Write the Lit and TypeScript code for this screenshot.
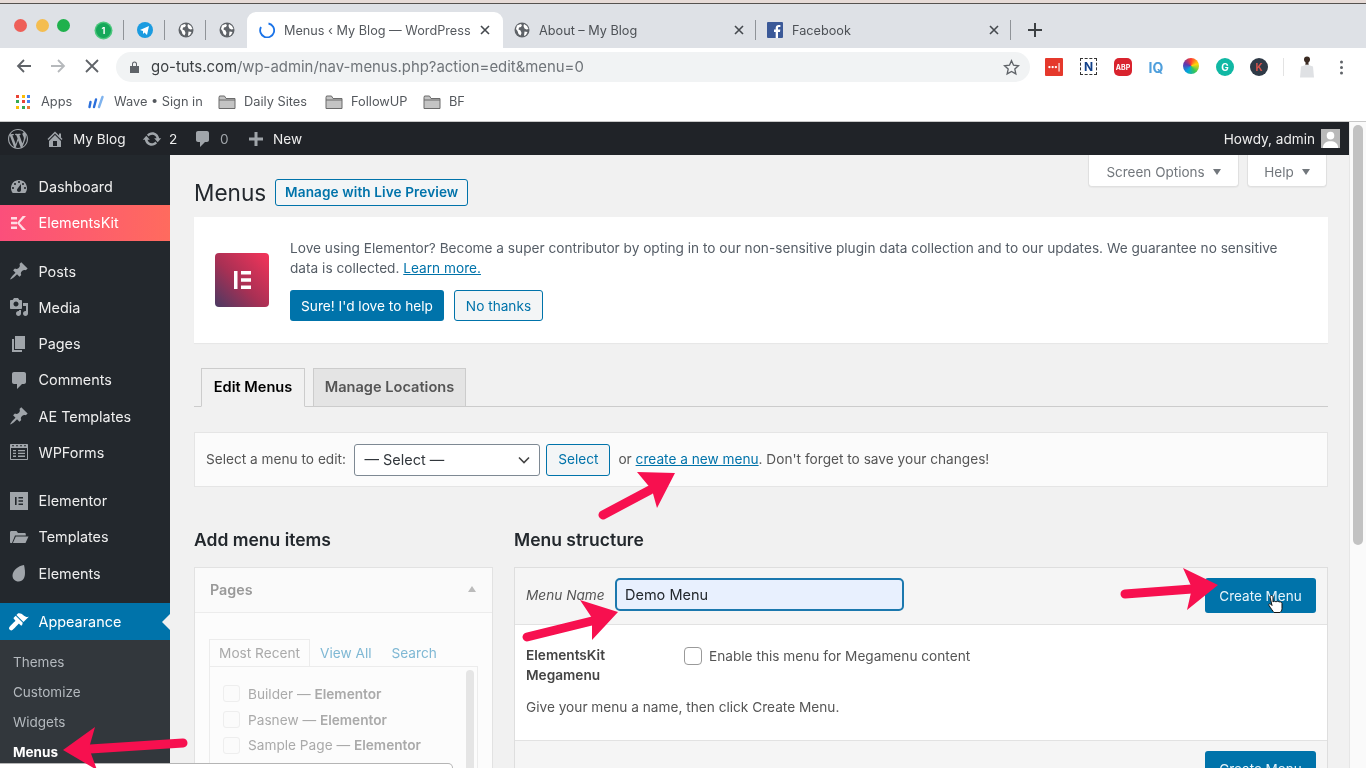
import { LitElement, html, css, svg } from "lit";
import { customElement } from "lit/decorators.js";

const D = {
  wp: "M20 10c0-5.51-4.49-10-10-10C4.48 0 0 4.49 0 10c0 5.52 4.48 10 10 10 5.51 0 10-4.48 10-10zM7.78 15.37L4.37 6.22c.55-.02 1.17-.08 1.17-.08.5-.06.44-1.13-.06-1.11 0 0-1.45.11-2.37.11-.18 0-.37 0-.58-.01C4.12 2.69 6.87 1.11 10 1.11c2.33 0 4.45.87 6.05 2.34-.68-.11-1.65.39-1.65 1.58 0 .74.45 1.36.9 2.1.35.61.55 1.36.55 2.46 0 1.49-1.4 5-1.4 5l-3.03-8.37c.54-.02.82-.17.82-.17.5-.05.44-1.25-.06-1.22 0 0-1.44.12-2.38.12-.87 0-2.33-.12-2.33-.12-.5-.03-.56 1.2-.06 1.22l.92.08 1.26 3.41zM17.41 10c.24-.64.74-1.87.43-4.25.7 1.29 1.05 2.71 1.05 4.25 0 3.29-1.73 6.24-4.4 7.78.97-2.59 1.94-5.2 2.92-7.78zM6.1 18.09C3.12 16.65 1.11 13.53 1.11 10c0-1.3.23-2.48.72-3.59C3.25 10.3 4.67 14.2 6.1 18.09zm4.03-6.63l2.58 6.98c-.86.29-1.76.45-2.71.45-.79 0-1.57-.11-2.29-.33.81-2.38 1.62-4.74 2.42-7.1z",
  home: "M16 8.5l1.53 1.53-1.06 1.06L10 4.62l-6.47 6.47-1.06-1.06L10 2.5l4 4v-2h2v4zm-6-2.46l6 5.99V18H4v-5.97zM12 17v-5H8v5h4z",
  update: "M10.2 3.28c3.53 0 6.43 2.61 6.92 6h2.08l-3.5 4-3.5-4h2.32c-.45-1.97-2.21-3.45-4.32-3.45-1.45 0-2.73.71-3.54 1.78L4.95 5.66C6.23 4.2 8.11 3.28 10.2 3.28zm-.4 13.44c-3.52 0-6.43-2.61-6.92-6H.8l3.5-4c1.17 1.33 2.33 2.67 3.5 4H5.48c.45 1.97 2.21 3.45 4.32 3.45 1.45 0 2.73-.71 3.54-1.78l1.71 1.95c-1.28 1.46-3.15 2.38-5.25 2.38z",
  comment: "M5 2h9c1.1 0 2 .9 2 2v7c0 1.1-.9 2-2 2h-2l-5 5v-5H5c-1.1 0-2-.9-2-2V4c0-1.1.9-2 2-2z",
  plus: "M8.500 3h3v5.500H17v3h-5.500V17h-3v-5.500H3v-3h5.500z",
  dash: "M3.76 16h12.48c1.1-1.37 1.76-3.11 1.76-5 0-4.42-3.58-8-8-8s-8 3.58-8 8c0 1.89.66 3.63 1.76 5zM10 4c.55 0 1 .45 1 1s-.45 1-1 1-1-.45-1-1 .45-1 1-1zM6 6c.55 0 1 .45 1 1s-.45 1-1 1-1-.45-1-1 .45-1 1-1zm8 0c.55 0 1 .45 1 1s-.45 1-1 1-1-.45-1-1 .45-1 1-1zm-5.37 5.55L12 7v6c0 1.1-.9 2-2 2s-2-.9-2-2c0-.57.24-1.08.63-1.45zM4 10c.55 0 1 .45 1 1s-.45 1-1 1-1-.45-1-1 .45-1 1-1zm12 0c.55 0 1 .45 1 1s-.45 1-1 1-1-.45-1-1 .45-1 1-1z",
  ek: "M2 4h6v2.4H2zM2 8.8h6v2.4H2zM2 13.6h6V16H2zM17 3l-6.5 7 6.5 7h-3.4L8 10l5.6-7z",
  pin: "M10.44 3.02l1.82-1.82 6.36 6.35-1.83 1.82c-1.05-.68-2.48-.57-3.41.36l-.75.75c-.92.93-1.04 2.35-.35 3.41l-1.83 1.82-2.41-2.41-2.8 2.79c-.42.42-3.38 2.71-3.8 2.29s1.86-3.39 2.28-3.81l2.79-2.79L4.1 9.36l1.83-1.82c1.05.69 2.48.57 3.4-.36l.75-.75c.93-.92 1.05-2.35.36-3.41z",
  media: "M13 11V4c0-.55-.45-1-1-1h-1.67L9 1H5L3.67 3H2c-.55 0-1 .45-1 1v7c0 .55.45 1 1 1h10c.55 0 1-.45 1-1zM7 4.5c1.38 0 2.5 1.12 2.5 2.5S8.38 9.5 7 9.5 4.5 8.38 4.5 7 5.62 4.5 7 4.5zM14 6h5v10.5c0 1.38-1.12 2.5-2.5 2.5S14 17.88 14 16.5s1.12-2.5 2.5-2.5c.17 0 .34.02.5.05V9h-3V6zm-4 8.05V13h2v3.5c0 1.38-1.12 2.5-2.5 2.5S7 17.88 7 16.5 8.12 14 9.5 14c.17 0 .34.02.5.05z",
  pages: "M6 15V2h10v13H6zm-1 1h8v2H3V5h2v11z",
  comments: "M5 2h10c1.1 0 2 .9 2 2v8c0 1.1-.9 2-2 2h-2l-5 5v-5H5c-1.1 0-2-.9-2-2V4c0-1.1.9-2 2-2z",
  form: "M2 2h16c.6 0 1 .4 1 1v14c0 .6-.4 1-1 1H2c-.6 0-1-.4-1-1V3c0-.6.4-1 1-1zm0 4v11h16V6zm1-3l1 2 1-2zm4 0l1 2 1-2zm4 0l1 2 1-2zm4 0l1 2 1-2zM4 8h3v1.3H4zm5 0h7v1.3H9zM4 10.800h3v1.300H4zm5 0h7v1.300H9zM4 13.600h3v1.300H4zm5 0h7v1.300H9z",
  elementor: "M1 1h18v18H1zM6 6v8h1.600V6zm3.500 0v1.500H14V6zm0 3.200v1.600H14V9.200zm0 3.300V14H14v-1.500z",
  folder: "M1 5.500C1 4.500 1.600 4 2.500 4h5l1.500 2h6.500c.8 0 1.300.5 1.300 1.300V8.500H6L3 16H2c-.6 0-1-.4-1-1zM6.800 9.500H19.500L16.500 16H3.900z",
  leaf: "M15 2C9 3 3.500 7.500 3.500 12.500 3.500 16 6 18.500 9.500 18.500c4.500 0 6.500-4 6.500-8.500 0-3-.5-6-1-8z",
  brush: "M14.480 11.060L7.410 3.990l1.500-1.500c.5-.56 2.300-.47 3.510.32 1.210.8 1.430 1.280 2.910 2.100 1.180.64 2.450 1.260 4.450.85zm-.71.71L6.700 4.700 4.930 6.470c-.39.39-.39 1.020 0 1.410l1.060 1.060c.39.39.39 1.030 0 1.420-.6.6-6.030 5.800-6.030 6.800 0 .9 1.200 2.300 2.400 2.300 1.100 0 6.100-5.600 6.800-6.300.39-.39 1.020-.39 1.410 0l1.060 1.060c.39.39 1.020.39 1.410 0z",
};

const icon = (d: string, cls = "ic") =>
  html`<svg class=${cls} viewBox="0 0 20 20"><path fill-rule="evenodd" d=${d}></path></svg>`;

const globe = html`<svg class="fav" viewBox="0 0 16 16"><circle cx="8" cy="8" r="7.500" fill="#5f6368"></circle><path fill="#fff" d="M3 3.500l3.500-1.500 1.500 1-1 2-2 .5-.5 2 2 1 1 2.500-1 2.500-2-1.500-1-3-1.500-2zM10 2l3 2 1.500 3-2 .5-2-1-1-2.500zM10.500 9.500l3 .5-1.500 3-2 1z"></path></svg>`;

const folderBm = html`<svg class="bmf" viewBox="0 0 18 16"><path fill="#c4c4c4" stroke="#6b6b6b" stroke-width="1" d="M1 3.500V14.500H17V4.500H8L6.500 2H1.500z"></path><path fill="none" stroke="#6b6b6b" d="M1 6H17"></path></svg>`;

const navA: [string, string][] = [["dash", "Dashboard"]];
const navB: [string, string][] = [
  ["pin", "Posts"], ["media", "Media"], ["pages", "Pages"], ["comments", "Comments"],
  ["pin", "AE Templates"], ["form", "WPForms"],
];
const navC: [string, string][] = [["elementor", "Elementor"], ["folder", "Templates"], ["leaf", "Elements"]];

const appsColors = ["#ea4335", "#fbbc05", "#4285f4", "#34a853", "#ea4335", "#4285f4", "#fbbc05", "#34a853", "#ea7a35"];

const arrows: [number[], string][] = [
  [[183, 743, 90, 749], "63,750 95,727 89,748 97,770"],
  [[603, 515, 650, 490], "675,473 637,472 652,490 657,508"],
  [[527, 637, 592, 621], "618,612 580,600 592,618 592,640"],
  [[1125, 594, 1192, 589], "1218,585 1183,568 1192,588 1187,610"],
];

@customElement("app-root")
export class AppRoot extends LitElement {
  static styles = css`
    :host { display: block; width: 1366px; height: 768px; overflow: hidden; position: relative; font-family: Inter, "Noto Sans", sans-serif; background: #fff; }
    * { box-sizing: border-box; }
    svg { display: block; flex: none; }
    .page { width: 1366px; height: 768px; overflow: hidden; filter: blur(0.4px); position: relative; }

    .wall { height: 4px; background: #e6dbd7; border-bottom: 1px solid #55524f; }
    .strip { height: 44px; background: #dee1e6; display: flex; align-items: stretch; font-size: 12.700px; color: #4d5156; }
    .lights { display: flex; align-items: flex-start; gap: 8.500px; padding: 15px 0 0 14px; width: 83px; }
    .lights i { width: 13px; height: 13px; border-radius: 50%; }
    .l1 { background: #ee5f58; } .l2 { background: #f4bd50; } .l3 { background: #1fb14d; }
    .pin { width: 41px; display: flex; align-items: center; justify-content: center; padding-top: 8px; position: relative; }
    .sep::after { content: ""; position: absolute; right: 0; top: 16px; height: 20px; width: 1px; background: #8f9398; }
    .fav { width: 16px; height: 16px; }
    .g1 { width: 15px; height: 15px; border-radius: 50%; background: #16a85a; color: #fff; font-size: 9px; font-weight: 700; display: flex; align-items: center; justify-content: center; box-shadow: 0 0 0 1.500px #4dc77e; }
    .tab { width: 253px; position: relative; display: flex; align-items: center; padding: 8px 12px 0 11px; gap: 9px; }
    .tab.fb { width: 255px; }
    .tab.active { width: 256px; background: #fff; border-radius: 9px 9px 0 0; margin-top: 8px; padding: 0 14px 0 12px; }
    .tab .t { flex: 1; white-space: nowrap; }
    .tab.active .t { color: #55595e; }
    .x { width: 10px; height: 10px; }
    .x path { stroke: #45494e; stroke-width: 1.600; fill: none; }
    .newtab { width: 48px; display: flex; align-items: center; padding: 8px 0 0 17px; }
    .newtab path { stroke: #3c4043; stroke-width: 2; }

    .toolbar { height: 35px; background: #fff; display: flex; align-items: center; }
    .navbtns { width: 116px; display: flex; align-items: center; padding-left: 15px; gap: 16px; }
    .navbtns svg { width: 18px; height: 18px; }
    .omni { width: 914px; height: 30px; margin-top: 3px; background: #f1f3f4; border-radius: 15px; display: flex; align-items: center; padding: 0 10px 0 14px; font-size: 14.900px; color: #70757a; white-space: nowrap; }
    .omni b { font-weight: 400; color: #3c4043; }
    .lock { width: 9px; height: 12px; margin-right: 12px; }
    .star { width: 17px; height: 17px; margin-left: auto; }
    .exts { display: flex; align-items: center; height: 100%; padding-top: 2px; position: relative; flex: 1; }
    .ext { position: absolute; top: 10px; width: 18px; height: 18px; display: flex; align-items: center; justify-content: center; font-weight: 700; }
    .e1 { background: #e5392c; color: #fff; font-size: 7px; letter-spacing: 0; border-radius: 1px; }
    .e2 { border: 1.500px dashed #333; color: #12418a; font-size: 12px; width: 17px; height: 17px; }
    .e3 { background: #d9232e; color: #fff; font-size: 7px; border-radius: 5px; }
    .e4 { color: #4f9fdc; font-size: 14px; }
    .e5 { border-radius: 50%; background: conic-gradient(#ff3b30, #ffd60a, #34c759, #00a5e0, #5e35b1, #ff3b30); width: 16px; height: 16px; }
    .e6 { background: #11b8a4; color: #fff; border-radius: 50%; font-size: 10px; }
    .e7 { background: #2f3a47; color: #d5534c; border-radius: 50%; font-size: 10px; }
    .tsep { position: absolute; left: 253px; top: 10px; width: 1px; height: 18px; background: #e3e3e3; }
    .avatar { position: absolute; left: 268px; top: 8px; width: 18px; height: 22px; }
    .dots { position: absolute; left: 310px; top: 12px; width: 3px; height: 15px; }

    .bookmarks { height: 39px; background: #fff; border-bottom: 1px solid #c8c8c8; display: flex; align-items: center; padding: 0 0 1px 16px; font-size: 12.800px; color: #54585d; white-space: nowrap; }
    .bm { display: flex; align-items: center; }
    .bm.w1 { width: 47px; } .bm.w2 { width: 104px; } .bm.w3 { width: 81px; } .bm.w4 { width: 72px; }
    .apps { width: 14px; height: 14px; display: grid; grid-template-columns: repeat(3, 3px); gap: 2.500px; margin-right: 11px; }
    .apps i { width: 3px; height: 3px; }
    .bmw { width: 17px; height: 14px; margin: 0 9px 0 0; }
    .bmf { width: 18px; height: 16px; margin-right: 8px; }

    .wp { height: 646px; display: flex; background: #f1f1f1; }
    .wpmain { width: 1349px; display: flex; flex-direction: column; }
    .vbar { flex: 1; background: #fafafa; padding: 3px 3px 0; border-left: 1px solid #e6e6e6; }
    .vbar i { display: block; height: 420px; border-radius: 6px; background: #c2c2c2; }

    .adminbar { height: 33px; background: #202328; color: #eee; display: flex; align-items: center; font-size: 13.600px; white-space: nowrap; }
    .adminbar svg { fill: #a0a5aa; width: 20px; height: 20px; }
    .abi { display: flex; align-items: center; }
    .ab1 { width: 45px; padding-left: 8px; } .ab2 { width: 97px; gap: 8px; } .ab3 { width: 51px; gap: 7px; } .ab4 { width: 53px; gap: 7px; } .ab5 { gap: 7px; }
    .howdy { margin-left: auto; display: flex; align-items: center; gap: 6px; padding-right: 9px; }
    .uav { width: 19px; height: 19px; background: #b9b9b9; display: flex; align-items: flex-end; justify-content: center; overflow: hidden; }
    .adminbar .uav svg { width: 19px; height: 19px; fill: #fff; }
    .dim { color: #a0a5aa; }

    .body { flex: 1; display: flex; min-height: 0; }
    .side { width: 170px; background: #23282d; color: #eee; font-size: 14.400px; padding-top: 13.500px; flex: none; }
    .nav { height: 36.250px; display: flex; align-items: center; padding-left: 9px; gap: 9.500px; white-space: nowrap; }
    .nav svg { width: 20px; height: 20px; fill: #a0a5aa; }
    .gap { height: 12px; }
    .nav.ek { background: linear-gradient(90deg, #fb4f7b, #ff6b5e); color: #fff; }
    .nav.ek svg { fill: #fff; opacity: .8; }
    .nav.cur { background: #0073aa; color: #fff; position: relative; }
    .nav.cur svg { fill: #fff; }
    .nav.cur::after { content: ""; position: absolute; right: 0; top: 11px; border: 8px solid transparent; border-right-color: #f1f1f1; border-left: 0; }
    .sub { background: #32373c; color: #b4b9be; font-size: 13.500px; padding-top: 7px; }
    .sub div { height: 30px; display: flex; align-items: center; padding-left: 13px; }
    .sub .on { color: #fff; font-weight: 700; }

    .content { flex: 1; padding: 0 21px 0 24px; min-width: 0; color: #444; font-size: 13.670px; overflow: hidden; }
    .meta { height: 24px; display: flex; justify-content: flex-end; gap: 8px; padding-right: 1px; }
    .meta div { height: 32px; padding-top: 3px; background: #fff; border: 1px solid #e0e0e0; border-top: 0; border-radius: 0 0 4px 4px; box-shadow: 0 1px 1px rgba(0,0,0,.04); display: flex; align-items: center; justify-content: center; gap: 8px; color: #72777c; font-size: 13.500px; }
    .meta .m1 { width: 151px; } .meta .m2 { width: 80px; }
    .tri { width: 0; height: 0; border: 4.500px solid transparent; border-top: 6px solid #72777c; border-bottom: 0; }
    .title { height: 27px; display: flex; align-items: center; gap: 9px; }
    .title h1 { margin: 0 0 1px; font-size: 22.600px; font-weight: 400; color: #23282d; }
    .btn2 { border: 1px solid #0073aa; border-radius: 3px; color: #0073aa; background: #f3f5f6; display: flex; align-items: center; justify-content: center; white-space: nowrap; }
    .btn1 { background: #0073aa; border-radius: 3px; color: #fff; display: flex; align-items: center; justify-content: center; white-space: nowrap; }
    .live { width: 193px; height: 27px; padding-bottom: 1px; font-weight: 600; font-size: 13.600px; letter-spacing: .1px; }

    .notice { margin-top: 11px; height: 126px; background: #fff; display: flex; align-items: center; padding-left: 21px; gap: 21px; box-shadow: 0 1px 1px rgba(0,0,0,.04); }
    .elogo { width: 54px; height: 54px; border-radius: 4px; background: linear-gradient(45deg, #4a3a63 0%, #a83054 45%, #f5345a 100%); display: flex; align-items: center; justify-content: center; }
    .elogo svg { width: 26px; height: 26px; fill: #fff; }
    .ntext { line-height: 20px; white-space: nowrap; color: #555d66; margin-top: -1px; }
    .ntext a, .sel a { color: #0073aa; text-decoration: underline; }
    .nbtns { display: flex; gap: 10px; margin-top: 12px; }
    .nbtns .btn1 { width: 154px; height: 31px; }
    .nbtns .btn2 { width: 89px; height: 31px; }

    .tabs { margin-top: 25px; height: 39px; border-bottom: 1px solid #ccc; display: flex; gap: 8px; padding-left: 7px; font-size: 14.600px; font-weight: 600; }
    .tabs div { height: 39px; padding-bottom: 1px; border: 1px solid #ccc; display: flex; align-items: center; justify-content: center; }
    .tabs .a { width: 104px; background: #f1f1f1; color: #000; border-bottom-color: #f1f1f1; }
    .tabs .b { width: 153px; background: #e4e4e4; color: #555; }

    .sel { margin-top: 25px; height: 55px; background: #fbfbfb; border: 1px solid #e5e5e5; display: flex; align-items: center; padding-left: 11px; white-space: nowrap; color: #555; }
    .dd { width: 186px; height: 32px; margin-left: 8.500px; padding-bottom: 1px; background: #fff; border: 1px solid #7e8993; border-radius: 3px; display: flex; align-items: center; padding-left: 9px; color: #32373c; font-size: 14.500px; position: relative; }
    .dd svg { position: absolute; right: 9px; top: 11px; width: 12px; height: 8px; }
    .selb { width: 64px; height: 32px; margin: 0 8px 0 6px; padding-bottom: 1px; }
    .seltail { margin-bottom: 1px; }

    .cols { margin-top: 41px; display: flex; gap: 21px; align-items: flex-start; }
    .cols h2 { margin: 0 0 15px; height: 24px; line-height: 24px; font-size: 17.500px; font-weight: 600; color: #23282d; }
    .left { width: 299px; flex: none; }
    .right { flex: 1; min-width: 0; }
    .box { border: 1px solid #e2e2e2; background: #fcfcfc; height: 300px; }
    .bh { height: 45px; display: flex; align-items: center; justify-content: space-between; padding: 0 16px 2px 15px; border-bottom: 1px solid #ececec; color: #999; font-weight: 600; font-size: 14.300px; background: #fafafa; }
    .up { width: 0; height: 0; border: 4px solid transparent; border-bottom: 6px solid #bbb; border-top: 0; }
    .bb { padding: 26px 14px 0; }
    .ptabs { display: flex; height: 27px; color: #7fb8d4; }
    .ptabs span { display: flex; align-items: center; }
    .ptabs .pa { width: 101px; border: 1px solid #ececec; border-bottom: 0; color: #aaa; justify-content: center; background: #fcfcfc; margin-right: 10px; position: relative; z-index: 1; margin-bottom: -1px; height: 27px; }
    .ptabs .pv { margin-right: 20px; }
    .plist { height: 200px; border: 1px solid #ececec; position: relative; padding: 14px 0 0 13px; color: #aaa; }
    .plist i { position: absolute; right: 3px; top: 3px; width: 8px; bottom: 0; background: #e5e5e5; border-radius: 4px; }
    .pr { height: 25.700px; display: flex; align-items: center; gap: 8px; white-space: nowrap; }
    .pr u { display: block; width: 17px; height: 17px; border: 1px solid #eee; border-radius: 3px; background: #fbfbfb; }
    .pr b { font-weight: 600; }

    .mbox { border: 1px solid #dedede; background: #fff; }
    .mh { height: 57px; background: #f5f5f5; border-bottom: 1px solid #e2e2e2; display: flex; align-items: flex-start; padding: 10px 11px 0; }
    .mh em { color: #555; width: 89px; height: 33px; display: flex; align-items: center; }
    .inp { width: 289px; height: 33px; background: #e8f0fe; border: 2px solid #1b78ae; border-radius: 5px; display: flex; align-items: center; padding-left: 8px; color: #23282d; font-size: 14.500px; }
    .create { width: 111px; height: 35px; margin-left: auto; font-size: 13.500px; color: #e8f4fa; }
    .mb { padding: 20px 11px 22px; height: 115px; line-height: 20px; color: #555; }
    .mrow { display: grid; grid-template-columns: 158px 1fr; margin-bottom: 12px; }
    .mrow b { font-weight: 600; color: #444; }
    .chk { display: flex; gap: 7px; align-items: flex-start; padding-top: 1px; }
    .chk u { display: block; width: 18px; height: 18px; margin-top: 1px; border: 1.500px solid #9a9a9a; border-radius: 4px; background: #fff; }
    .mf { height: 60px; background: #f5f5f5; border-top: 1px solid #e2e2e2; display: flex; padding: 10px 11px 0; }

    .status { position: absolute; left: 0; top: 763px; width: 453px; height: 8px; background: #fff; border: 1px solid #b5b5b5; border-left: 0; border-radius: 0 5px 0 0; }
    .overlay { position: absolute; left: 0; top: 0; width: 1366px; height: 768px; pointer-events: none; }
  `;

  render() {
    const x = html`<svg class="x" viewBox="0 0 10 10"><path d="M1 1l8 8M9 1l-8 8"></path></svg>`;
    return html`<div class="page">
      <div class="wall"></div>
      <div class="strip">
        <div class="lights"><i class="l1"></i><i class="l2"></i><i class="l3"></i></div>
        <div class="pin sep"><span class="g1">1</span></div>
        <div class="pin sep">
          <svg class="fav" viewBox="0 0 16 16"><circle cx="8" cy="8" r="8" fill="#1b9be0"></circle><path fill="#fff" d="M3 8l9-4-2 9-2.500-2.500-1.500 1.500V9z"></path></svg>
        </div>
        <div class="pin sep">${globe}</div>
        <div class="pin">${globe}</div>
        <div class="tab active">
          <svg class="fav" viewBox="0 0 16 16"><path d="M9.500 1.500A7 7 0 1 1 2 5" fill="none" stroke="#1a73e8" stroke-width="1.800"></path></svg>
          <span class="t">Menus ‹ My Blog — WordPress</span>${x}
        </div>
        <div class="tab sep">${globe}<span class="t">About – My Blog</span>${x}</div>
        <div class="tab fb sep">
          <svg class="fav" viewBox="0 0 16 16"><rect width="16" height="16" rx="1" fill="#3b5998"></rect><path fill="#fff" d="M11 16V10h2l.3-2.400H11V6.200c0-.7.2-1.200 1.200-1.200h1.200V3c-.5-.1-1.100-.1-1.700-.1-1.800 0-3 1.100-3 3.100v1.600H7V10h1.700v6z"></path></svg>
          <span class="t">Facebook</span>${x}
        </div>
        <div class="newtab"><svg width="14" height="14" viewBox="0 0 14 14"><path d="M7 0v14M0 7h14"></path></svg></div>
      </div>

      <div class="toolbar">
        <div class="navbtns">
          <svg viewBox="0 0 18 18"><path d="M16 9H3M9 3L3 9l6 6" fill="none" stroke="#5f6368" stroke-width="1.800"></path></svg>
          <svg viewBox="0 0 18 18"><path d="M2 9h13M9 3l6 6-6 6" fill="none" stroke="#b6b9bc" stroke-width="1.800"></path></svg>
          <svg viewBox="0 0 18 18"><path d="M3 3l12 12M15 3L3 15" fill="none" stroke="#5f6368" stroke-width="1.800"></path></svg>
        </div>
        <div class="omni">
          <svg class="lock" viewBox="0 0 9 12"><path fill="#5f6368" d="M0 5h9v7H0zM2 5V3a2.500 2.500 0 0 1 5 0v2H6V3a1.500 1.500 0 0 0-3 0v2z"></path></svg>
          <b>go-tuts.com</b>/wp-admin/nav-menus.php?action=edit&amp;menu=0
          <svg class="star" viewBox="0 0 20 20"><path d="M10 2l2.400 5.300 5.800.7-4.300 3.900 1.200 5.700-5.100-2.900-5.100 2.900 1.200-5.700L1.800 8l5.800-.7z" fill="none" stroke="#5f6368" stroke-width="1.600"></path></svg>
        </div>
        <div class="exts">
          <span class="ext e1" style="left:15px">•••|</span>
          <span class="ext e2" style="left:50px">N</span>
          <span class="ext e3" style="left:84px">ABP</span>
          <span class="ext e4" style="left:117px">IQ</span>
          <span class="ext e5" style="left:153px"></span>
          <span class="ext e6" style="left:186px">G</span>
          <span class="ext e7" style="left:220px">K</span>
          <i class="tsep"></i>
          <svg class="avatar" viewBox="0 0 18 22"><circle cx="9" cy="3.500" r="3" fill="#3a2a22"></circle><path d="M7.500 6h3v3h-3z" fill="#3a2a22"></path><path d="M3 10.500l6-2 6 2 1 11H2z" fill="#dfe1e4"></path></svg>
          <svg class="dots" viewBox="0 0 3 15"><circle cx="1.500" cy="2" r="1.500" fill="#5f6368"></circle><circle cx="1.500" cy="7.500" r="1.500" fill="#5f6368"></circle><circle cx="1.500" cy="13" r="1.500" fill="#5f6368"></circle></svg>
        </div>
      </div>

      <div class="bookmarks">
        <div class="apps">${appsColors.map((c) => html`<i style="background:${c}"></i>`)}</div>
        <span class="bm w1">Apps</span>
        <svg class="bmw" viewBox="0 0 17 14"><path stroke-linecap="round" stroke-width="2.400" fill="none" stroke="#2a6fdb" d="M2.500 7l-1 5M8 4.500L6 12"></path><path stroke-linecap="round" stroke-width="2.400" fill="none" stroke="#7fb3ee" d="M14.500 2l-3.500 10"></path></svg>
        <span class="bm w2">Wave • Sign in</span>
        ${folderBm}<span class="bm w3">Daily Sites</span>
        ${folderBm}<span class="bm w4">FollowUP</span>
        ${folderBm}<span class="bm">BF</span>
      </div>

      <div class="wp">
        <div class="wpmain">
          <div class="adminbar">
            <div class="abi ab1">${icon(D.wp)}</div>
            <div class="abi ab2">${icon(D.home)}<span>My Blog</span></div>
            <div class="abi ab3">${icon(D.update)}<span>2</span></div>
            <div class="abi ab4">${icon(D.comment)}<span class="dim">0</span></div>
            <div class="abi ab5">${icon(D.plus)}<span>New</span></div>
            <div class="howdy">Howdy, admin
              <span class="uav"><svg viewBox="0 0 20 20"><circle cx="10" cy="7" r="4"></circle><path d="M2 20c0-5 4-7 8-7s8 2 8 7z"></path></svg></span>
            </div>
          </div>
          <div class="body">
            <div class="side">
              ${navA.map(([i, t]) => html`<div class="nav">${icon((D as any)[i])}${t}</div>`)}
              <div class="nav ek">${icon(D.ek)}ElementsKit</div>
              <div class="gap"></div>
              ${navB.map(([i, t]) => html`<div class="nav">${icon((D as any)[i])}${t}</div>`)}
              <div class="gap"></div>
              ${navC.map(([i, t]) => html`<div class="nav">${icon((D as any)[i])}${t}</div>`)}
              <div class="gap"></div>
              <div class="nav cur">${icon(D.brush)}Appearance</div>
              <div class="sub"><div>Themes</div><div>Customize</div><div>Widgets</div><div class="on">Menus</div></div>
            </div>
            <div class="content">
              <div class="meta">
                <div class="m1">Screen Options <span class="tri"></span></div>
                <div class="m2">Help <span class="tri"></span></div>
              </div>
              <div class="title"><h1>Menus</h1><div class="btn2 live">Manage with Live Preview</div></div>
              <div class="notice">
                <div class="elogo"><svg viewBox="0 0 26 26"><path d="M5 4h3.500v18H5zM12 4h10v3.500H12zM12 11.200h10v3.600H12zM12 18.500h10V22H12z"></path></svg></div>
                <div class="ntext">
                  Love using Elementor? Become a super contributor by opting in to our non-sensitive plugin data collection and to our updates. We guarantee no sensitive<br />
                  data is collected. <a>Learn more.</a>
                  <div class="nbtns"><div class="btn1">Sure! I'd love to help</div><div class="btn2">No thanks</div></div>
                </div>
              </div>
              <div class="tabs"><div class="a">Edit Menus</div><div class="b">Manage Locations</div></div>
              <div class="sel">
                <span class="seltail">Select a menu to edit:</span>
                <div class="dd">— Select —<svg viewBox="0 0 12 8"><path d="M1 1.500l5 5 5-5" fill="none" stroke="#444" stroke-width="1.600"></path></svg></div>
                <div class="btn2 selb">Select</div>
                <span class="seltail">or <a>create a new menu</a>. Don't forget to save your changes!</span>
              </div>
              <div class="cols">
                <div class="left">
                  <h2>Add menu items</h2>
                  <div class="box">
                    <div class="bh">Pages<span class="up"></span></div>
                    <div class="bb">
                      <div class="ptabs"><span class="pa">Most Recent</span><span class="pv">View All</span><span>Search</span></div>
                      <div class="plist"><i></i>
                        <div class="pr"><u></u><span>Builder — <b>Elementor</b></span></div>
                        <div class="pr"><u></u><span>Pasnew — <b>Elementor</b></span></div>
                        <div class="pr"><u></u><span>Sample Page — <b>Elementor</b></span></div>
                      </div>
                    </div>
                  </div>
                </div>
                <div class="right">
                  <h2>Menu structure</h2>
                  <div class="mbox">
                    <div class="mh"><em>Menu Name</em><div class="inp">Demo Menu</div><div class="btn1 create">Create Menu</div></div>
                    <div class="mb">
                      <div class="mrow"><b>ElementsKit<br />Megamenu</b><div class="chk"><u></u>Enable this menu for Megamenu content</div></div>
                      Give your menu a name, then click Create Menu.
                    </div>
                    <div class="mf"><div class="btn1 create">Create Menu</div></div>
                  </div>
                </div>
              </div>
            </div>
          </div>
        </div>
        <div class="vbar"><i></i></div>
      </div>

      <div class="status"></div>
      <svg class="overlay" viewBox="0 0 1366 768">
        ${arrows.map(([l, p]) => svg`<line x1=${l[0]} y1=${l[1]} x2=${l[2]} y2=${l[3]} stroke="#f7104f" stroke-width="9" stroke-linecap="round"></line><polygon points=${p} fill="#f7104f"></polygon>`)}
        <path d="M1270 597c0-2 3-2 3 0v5c1-1 2-1 3 0 1-1 2-1 3 0 1-.5 3 0 3 1.500v5c0 2-1 3-2 4h-6c-1-1-3-4-5-7-1-1.500 1-2.500 2-1l1 1z" fill="#fff" stroke="#111" stroke-width="1"></path>
      </svg>
    </div>`;
  }
}
